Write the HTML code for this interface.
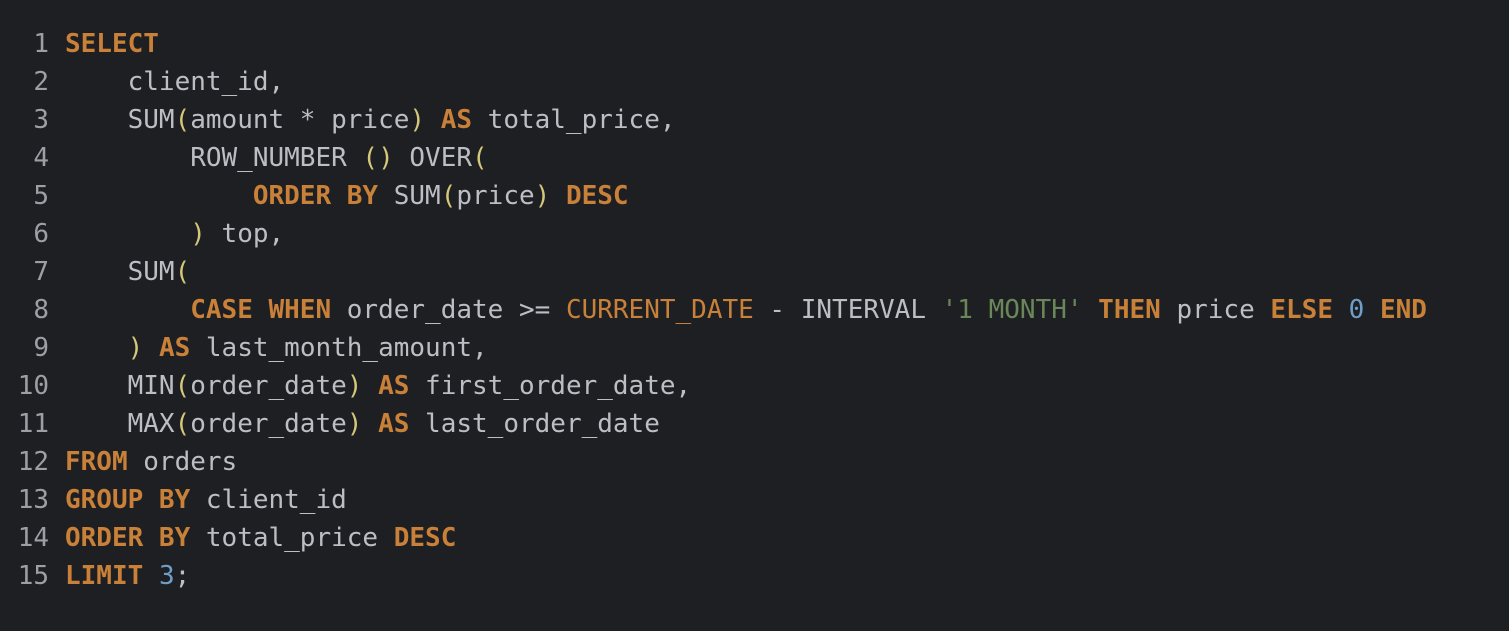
<!DOCTYPE html>
<html><head><meta charset="utf-8"><style>
html,body{margin:0;padding:0;background:#1e1f22;width:1509px;height:631px;overflow:hidden}
.c{position:absolute;top:25px;left:0;font-family:"DejaVu Sans Mono","Liberation Mono",monospace;font-size:26px;line-height:38px;color:#bcbec4}
.r{height:38px;white-space:pre}
.n{display:inline-block;width:49px;text-align:right;color:#9d9fa4;margin-right:16px}
.k{color:#c98139;font-weight:bold}
.p{color:#d5c87a}
.s{color:#6a8759}
.d{color:#6f9fc9}
</style></head><body>
<div class="c">
<div class="r"><span class="n">1</span><span class="k">SELECT</span></div>
<div class="r"><span class="n">2</span>    client_id,</div>
<div class="r"><span class="n">3</span>    SUM<span class="p">(</span>amount * price<span class="p">)</span> <span class="k">AS</span> total_price,</div>
<div class="r"><span class="n">4</span>        ROW_NUMBER <span class="p">()</span> OVER<span class="p">(</span></div>
<div class="r"><span class="n">5</span>            <span class="k">ORDER BY</span> SUM<span class="p">(</span>price<span class="p">)</span> <span class="k">DESC</span></div>
<div class="r"><span class="n">6</span>        <span class="p">)</span> top,</div>
<div class="r"><span class="n">7</span>    SUM<span class="p">(</span></div>
<div class="r"><span class="n">8</span>        <span class="k">CASE WHEN</span> order_date &gt;= <span style="color:#c98139">CURRENT_DATE</span> - INTERVAL <span class="s">'1 MONTH'</span> <span class="k">THEN</span> price <span class="k">ELSE</span> <span class="d">0</span> <span class="k">END</span></div>
<div class="r"><span class="n">9</span>    <span class="p">)</span> <span class="k">AS</span> last_month_amount,</div>
<div class="r"><span class="n">10</span>    MIN<span class="p">(</span>order_date<span class="p">)</span> <span class="k">AS</span> first_order_date,</div>
<div class="r"><span class="n">11</span>    MAX<span class="p">(</span>order_date<span class="p">)</span> <span class="k">AS</span> last_order_date</div>
<div class="r"><span class="n">12</span><span class="k">FROM</span> orders</div>
<div class="r"><span class="n">13</span><span class="k">GROUP BY</span> client_id</div>
<div class="r"><span class="n">14</span><span class="k">ORDER BY</span> total_price <span class="k">DESC</span></div>
<div class="r"><span class="n">15</span><span class="k">LIMIT</span> <span class="d">3</span>;</div>
</div>
</body></html>
